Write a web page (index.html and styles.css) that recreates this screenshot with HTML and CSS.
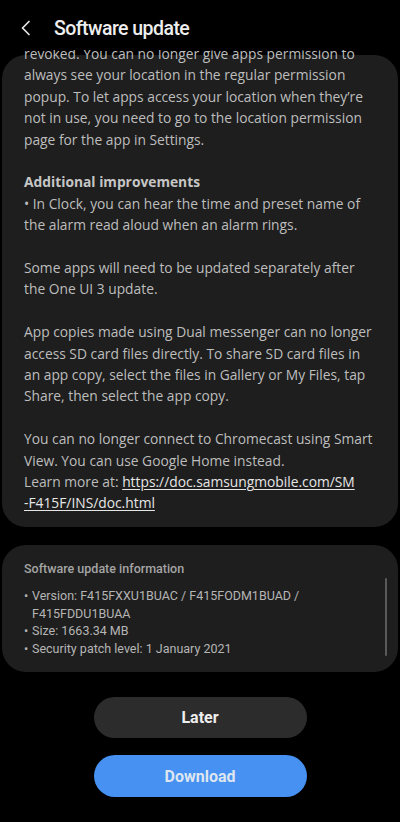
FILE: index.html
```html
<!DOCTYPE html>
<html lang="en">
<head>
<meta charset="utf-8">
<link rel="stylesheet" href="styles.css">
</head>
<body>
<div class="screen">
  <header class="appbar">
    <svg class="back" width="12" height="16" viewBox="0 0 12 16"><path d="M9 1.5 L2.5 8 L9 14.5" fill="none" stroke="#e6e6e6" stroke-width="1.7" stroke-linecap="round" stroke-linejoin="round"/></svg>
    <h1 class="title">Software update</h1>
  </header>
  <main class="scroll">
    <section class="card notes">
      <div class="notes-body">
        <p>revoked. You can no longer give apps permission to<br>always see your location in the regular permission<br>popup. To let apps access your location when they’re<br>not in use, you need to go to the location permission<br>page for the app in Settings.</p>
        <p><b class="head">Additional improvements</b><br>• In Clock, you can hear the time and preset name of<br>the alarm read aloud when an alarm rings.</p>
        <p>Some apps will need to be updated separately after<br>the One UI 3 update.</p>
        <p>App copies made using Dual messenger can no longer<br>access SD card files directly. To share SD card files in<br>an app copy, select the files in Gallery or My Files, tap<br>Share, then select the app copy.</p>
        <p>You can no longer connect to Chromecast using Smart<br>View. You can use Google Home instead.<br>Learn more at: <a class="link">https://doc.samsungmobile.com/SM<br>-F415F/INS/doc.html</a></p>
      </div>
    </section>
    <section class="card info">
      <div class="info-title">Software update information</div>
      <ul class="info-list">
        <li>Version: F415FXXU1BUAC / F415FODM1BUAD /<br>F415FDDU1BUAA</li>
        <li>Size: 1663.34 MB</li>
        <li>Security patch level: 1 January 2021</li>
      </ul>
      <span class="scrollbar"></span>
    </section>
  </main>
  <footer class="actions">
    <button class="btn later">Later</button>
    <button class="btn download">Download</button>
  </footer>
</div>
</body>
</html>
```
FILE: styles.css
```css
* { box-sizing: border-box; }
html, body { margin: 0; padding: 0; background: #000; }
body {
  font-family: Roboto, "Noto Sans", "Liberation Sans", sans-serif;
  color: #bdbdbd;
}
.screen { width: 400px; height: 822px; display: flex; flex-direction: column; }
.appbar {
  height: 50px;
  display: flex;
  align-items: center;
  padding: 6px 0 0 20px;
}
.back { flex: none; }
.title {
  margin: 0 0 0 22px;
  font-size: 19.5px;
  font-weight: 500;
  color: #eeeeee;
  letter-spacing: -0.55px;
}
.scroll {
  height: 630px;
  overflow: hidden;
  display: flex;
  flex-direction: column;
  gap: 18px;
  padding: 5px 2px 0;
}
.card {
  background: #1e1e1e;
  border-radius: 24px;
  flex: none;
}
.notes {
  display: flow-root;
  padding: 0 10px 13px 22px;
}
.notes-body {
  margin-top: -12px;
  font-family: "Open Sans", "Noto Sans", sans-serif;
  font-size: 13.8px;
  line-height: 21.4px;
  white-space: nowrap;
}
.notes-body p { margin: 0 0 21.4px; }
.notes-body p:last-child { margin-bottom: 0; }
.head { font-weight: 700; color: #c6c6c6; }
.link { color: #e6e6e6; text-decoration: underline; text-underline-offset: 2px; }
.info {
  position: relative;
  padding: 15px 20px 14px 22px;
}
.info-title {
  font-size: 12.5px;
  line-height: 18px;
  color: #a5a5a5;
  font-weight: 500;
}
.info-list {
  list-style: none;
  margin: 9px 0 0;
  padding: 0;
  font-size: 12.5px;
  line-height: 17.7px;
  color: #b5b5b5;
  white-space: nowrap;
}
.info-list li { padding-left: 8px; position: relative; }
.info-list li::before {
  content: "•";
  position: absolute;
  left: 0;
}
.scrollbar {
  position: absolute;
  right: 11px;
  top: 33px;
  width: 2px;
  height: 78px;
  background: #5a5a5a;
  border-radius: 1px;
}
.actions {
  display: flex;
  flex-direction: column;
  align-items: center;
  gap: 17px;
  padding-top: 17px;
}
.btn {
  width: 213px;
  height: 42px;
  border: none;
  border-radius: 21px;
  font-family: inherit;
  font-size: 16px;
  font-weight: 700;
}
.later { background: #2c2c2c; color: #eeeeee; height: 41px; }
.download { background: #4691f2; color: #dde6f0; }
```
